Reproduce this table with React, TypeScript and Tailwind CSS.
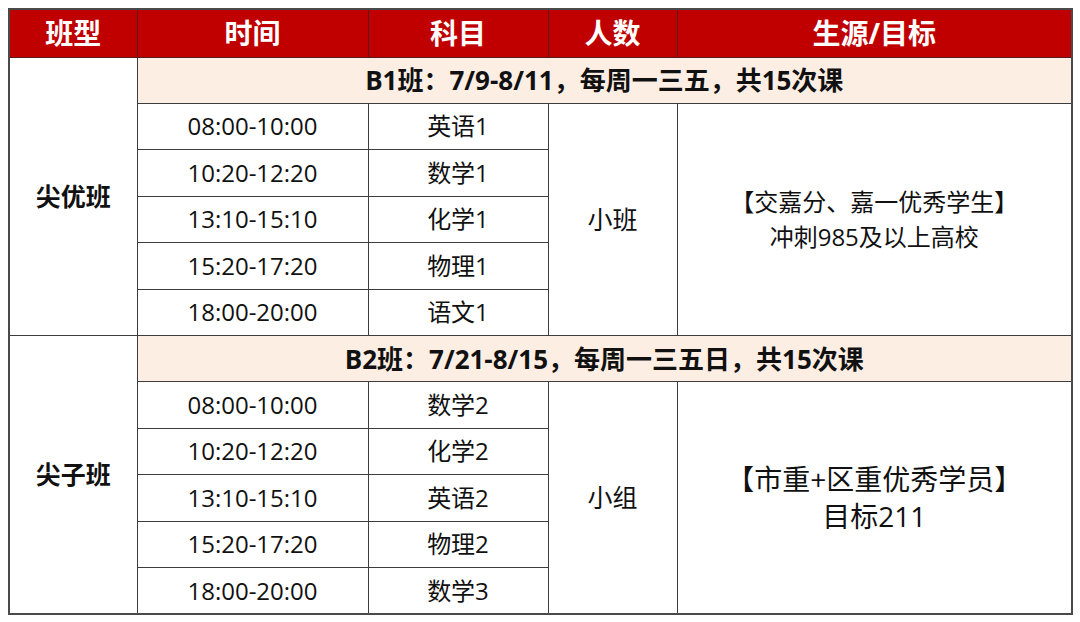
import React from 'react';

type Block = {
  name: string;
  banner: string;
  size: string;
  rows: [string, string][];
  target: string[];
  targetClass: string;
};

const blocks: Block[] = [
  {
    name: '尖优班',
    banner: 'B1班：7/9-8/11，每周一三五，共15次课',
    size: '小班',
    rows: [
      ['08:00-10:00', '英语1'],
      ['10:20-12:20', '数学1'],
      ['13:10-15:10', '化学1'],
      ['15:20-17:20', '物理1'],
      ['18:00-20:00', '语文1'],
    ],
    target: ['【交嘉分、嘉一优秀学生】', '冲刺985及以上高校'],
    targetClass: 'text-[24px] leading-[35px]',
  },
  {
    name: '尖子班',
    banner: 'B2班：7/21-8/15，每周一三五日，共15次课',
    size: '小组',
    rows: [
      ['08:00-10:00', '数学2'],
      ['10:20-12:20', '化学2'],
      ['13:10-15:10', '英语2'],
      ['15:20-17:20', '物理2'],
      ['18:00-20:00', '数学3'],
    ],
    target: ['【市重+区重优秀学员】', '目标211'],
    targetClass: 'text-[28px] leading-[37px]',
  },
];

const cell = 'border-[1.5px] border-[#3d3d3d] text-center align-middle p-0';

export default function App() {
  return (
    <div
      className="w-[1080px] h-[622px] bg-white pt-[8px] pl-[8px] text-[#111]"
      style={{ fontFamily: '"Open Sans", "Noto Sans CJK SC", sans-serif' }}
    >
      <table className="border-collapse table-fixed w-[1063px] border-2 border-[#4a4a4a]">
        <colgroup>
          <col className="w-[128px]" />
          <col className="w-[231px]" />
          <col className="w-[180px]" />
          <col className="w-[129px]" />
          <col className="w-[395px]" />
        </colgroup>
        <thead>
          <tr className="h-[48px] bg-[#c00000] text-white text-[28px] font-bold">
            {['班型', '时间', '科目', '人数', '生源/目标'].map((h) => (
              <th key={h} className="border-[1.5px] border-[#5a1a1a] text-center align-middle p-0 font-bold leading-none">
                {h}
              </th>
            ))}
          </tr>
        </thead>
        <tbody>
          {blocks.map((b) => (
            <React.Fragment key={b.name}>
              <tr className="h-[46px]">
                <td rowSpan={6} className={`${cell} text-[25px] font-bold`}>
                  {b.name}
                </td>
                <td colSpan={4} className={`${cell} bg-[#fdeee4] text-[26px] font-bold leading-none`}>
                  {b.banner}
                </td>
              </tr>
              {b.rows.map(([time, subject], i) => (
                <tr key={time} className="h-[46.5px]">
                  <td className={`${cell} text-[24px] leading-none`}>{time}</td>
                  <td className={`${cell} text-[24px] leading-none`}>{subject}</td>
                  {i === 0 && (
                    <>
                      <td rowSpan={5} className={`${cell} text-[25px]`}>
                        {b.size}
                      </td>
                      <td rowSpan={5} className={`${cell} ${b.targetClass}`}>
                        {b.target.map((t) => (
                          <div key={t}>{t}</div>
                        ))}
                      </td>
                    </>
                  )}
                </tr>
              ))}
            </React.Fragment>
          ))}
        </tbody>
      </table>
    </div>
  );
}
